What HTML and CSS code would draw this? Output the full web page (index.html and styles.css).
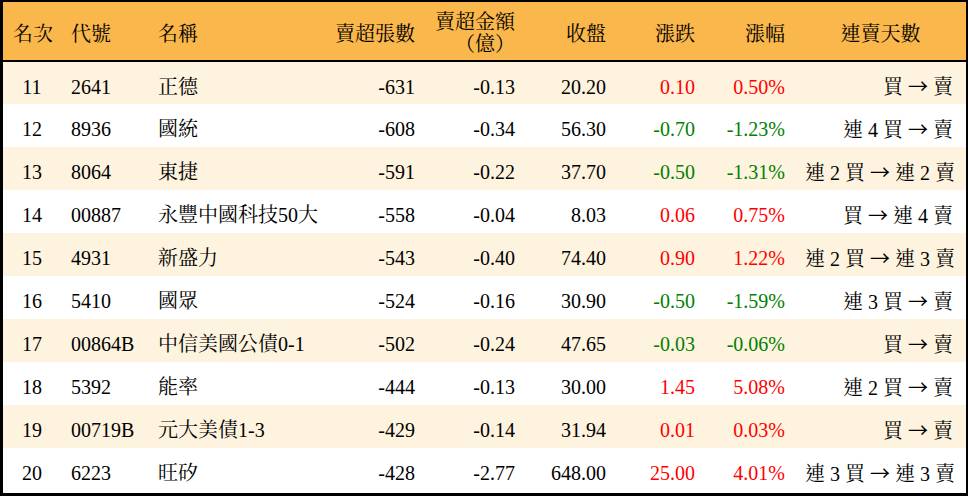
FILE: index.html
```html
<!DOCTYPE html>
<html lang="zh-Hant">
<head>
<meta charset="utf-8">
<title>賣超排行</title>
<link rel="stylesheet" href="styles.css">
</head>
<body>
<div class="frame">
<table class="rank">
  <colgroup>
    <col class="c-rank"><col class="c-code"><col class="c-name"><col class="c-vol"><col class="c-amt"><col class="c-close"><col class="c-chg"><col class="c-pct"><col class="c-days">
  </colgroup>
  <thead>
    <tr>
      <th class="ctr">名次</th>
      <th class="lft">代號</th>
      <th class="lft">名稱</th>
      <th class="rgt">賣超張數</th>
      <th class="rgt two">賣超金額<br>（億）</th>
      <th class="rgt">收盤</th>
      <th class="rgt">漲跌</th>
      <th class="rgt">漲幅</th>
      <th class="ctr">連賣天數</th>
    </tr>
  </thead>
  <tbody>
    <tr class="alt"><td class="ctr">11</td><td>2641</td><td>正德</td><td class="rgt">-631</td><td class="rgt">-0.13</td><td class="rgt">20.20</td><td class="rgt up">0.10</td><td class="rgt up">0.50%</td><td class="days">買 <span class="arr">→</span> 賣</td></tr>
    <tr><td class="ctr">12</td><td>8936</td><td>國統</td><td class="rgt">-608</td><td class="rgt">-0.34</td><td class="rgt">56.30</td><td class="rgt down">-0.70</td><td class="rgt down">-1.23%</td><td class="days">連 4 買 <span class="arr">→</span> 賣</td></tr>
    <tr class="alt"><td class="ctr">13</td><td>8064</td><td>東捷</td><td class="rgt">-591</td><td class="rgt">-0.22</td><td class="rgt">37.70</td><td class="rgt down">-0.50</td><td class="rgt down">-1.31%</td><td class="days">連 2 買 <span class="arr">→</span> 連 2 賣</td></tr>
    <tr><td class="ctr">14</td><td>00887</td><td>永豐中國科技50大</td><td class="rgt">-558</td><td class="rgt">-0.04</td><td class="rgt">8.03</td><td class="rgt up">0.06</td><td class="rgt up">0.75%</td><td class="days">買 <span class="arr">→</span> 連 4 賣</td></tr>
    <tr class="alt"><td class="ctr">15</td><td>4931</td><td>新盛力</td><td class="rgt">-543</td><td class="rgt">-0.40</td><td class="rgt">74.40</td><td class="rgt up">0.90</td><td class="rgt up">1.22%</td><td class="days">連 2 買 <span class="arr">→</span> 連 3 賣</td></tr>
    <tr><td class="ctr">16</td><td>5410</td><td>國眾</td><td class="rgt">-524</td><td class="rgt">-0.16</td><td class="rgt">30.90</td><td class="rgt down">-0.50</td><td class="rgt down">-1.59%</td><td class="days">連 3 買 <span class="arr">→</span> 賣</td></tr>
    <tr class="alt"><td class="ctr">17</td><td>00864B</td><td>中信美國公債0-1</td><td class="rgt">-502</td><td class="rgt">-0.24</td><td class="rgt">47.65</td><td class="rgt down">-0.03</td><td class="rgt down">-0.06%</td><td class="days">買 <span class="arr">→</span> 賣</td></tr>
    <tr><td class="ctr">18</td><td>5392</td><td>能率</td><td class="rgt">-444</td><td class="rgt">-0.13</td><td class="rgt">30.00</td><td class="rgt up">1.45</td><td class="rgt up">5.08%</td><td class="days">連 2 買 <span class="arr">→</span> 賣</td></tr>
    <tr class="alt"><td class="ctr">19</td><td>00719B</td><td>元大美債1-3</td><td class="rgt">-429</td><td class="rgt">-0.14</td><td class="rgt">31.94</td><td class="rgt up">0.01</td><td class="rgt up">0.03%</td><td class="days">買 <span class="arr">→</span> 賣</td></tr>
    <tr><td class="ctr">20</td><td>6223</td><td>旺矽</td><td class="rgt">-428</td><td class="rgt">-2.77</td><td class="rgt">648.00</td><td class="rgt up">25.00</td><td class="rgt up">4.01%</td><td class="days">連 3 買 <span class="arr">→</span> 連 3 賣</td></tr>
  </tbody>
</table>
</div>
</body>
</html>
```

FILE: styles.css
```css
html, body {
  margin: 0;
  padding: 0;
  background: #ffffff;
}

.frame {
  width: 968px;
  height: 496px;
  box-sizing: border-box;
  border-style: solid;
  border-color: #000000;
  border-width: 2px 2px 3px 3px;
  overflow: hidden;
}

.rank {
  width: 963px;
  border-collapse: collapse;
  table-layout: fixed;
  font-family: "Liberation Serif", "Noto Serif CJK TC", "Noto Sans CJK TC", serif;
  font-size: 20px;
  color: #000000;
}

.c-rank { width: 58px; }
.c-code { width: 87px; }
.c-name { width: 177px; }
.c-vol { width: 100px; }
.c-amt { width: 100px; }
.c-close { width: 91px; }
.c-chg { width: 89px; }
.c-pct { width: 90px; }
.c-days { width: 171px; }

.rank thead tr {
  background: #fab74b;
  height: 59px;
}

.rank th {
  font-weight: normal;
  padding: 6px 10px 0;
  line-height: 22px;
  border-bottom: 2px solid #000000;
  white-space: nowrap;
}

.rank th.two {
  padding-top: 4px;
}

.rank tbody tr {
  height: 43px;
}

.rank tbody tr.alt {
  background: #fef3de;
}

.rank td {
  padding: 7px 10px 0;
  white-space: nowrap;
  text-align: left;
  line-height: 22px;
}

.rank .ctr { text-align: center; }
.rank .lft { text-align: left; }
.rank .rgt { text-align: right; }

.rank td.days {
  text-align: right;
  padding-right: 13px;
}

.arr {
  font-family: "Noto Sans CJK TC", "DejaVu Sans", sans-serif;
}

.up { color: #ff0000; }
.down { color: #008000; }
```
